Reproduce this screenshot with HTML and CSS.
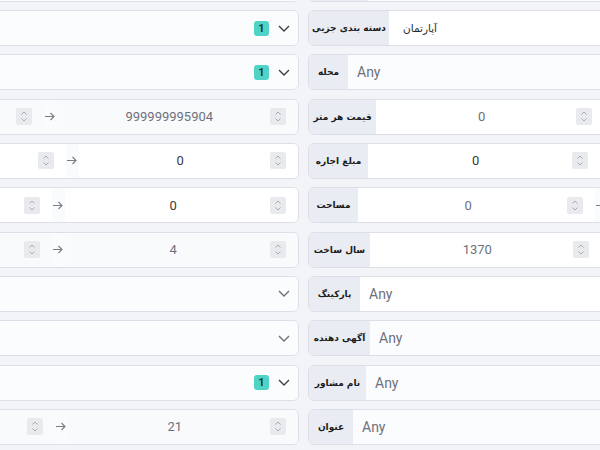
FILE: index.html
```html
<!DOCTYPE html>
<html lang="fa">
<head>
<meta charset="utf-8">
<title>فیلتر آگهی</title>
<link rel="stylesheet" href="styles.css">
</head>
<body>
<div class="form">

  <!-- row 0 -->
  <div class="field"><div class="label w60">شهر</div><div class="select"><span class="any">Any</span><span class="chev muted"><svg width="12" height="7" viewBox="0 0 12 7"><path d="M1 1l5 5 5-5"/></svg></span></div></div>
  <div class="field"><div class="label w60">دسته بندی</div><div class="select"><span class="any">Any</span></div></div>

  <!-- row 1 -->
  <div class="field"><div class="label w60">نوع آگهی</div><div class="select"><span class="any">Any</span><span class="badge">1</span><span class="chev"><svg width="12" height="7" viewBox="0 0 12 7"><path d="M1 1l5 5 5-5"/></svg></span></div></div>
  <div class="field"><div class="label w81">دسته بندی جزیی</div><div class="select white"><span class="fa-val">آپارتمان</span></div></div>

  <!-- row 2 -->
  <div class="field"><div class="label w60">منطقه</div><div class="select"><span class="any">Any</span><span class="badge">1</span><span class="chev"><svg width="12" height="7" viewBox="0 0 12 7"><path d="M1 1l5 5 5-5"/></svg></span></div></div>
  <div class="field"><div class="label w40">محله</div><div class="select"><span class="any">Any</span></div></div>

  <!-- row 3 -->
  <div class="field"><div class="label w40">قیمت</div>
    <div class="num soft"><span class="val grey">0</span><span class="spin"><svg width="16" height="17" viewBox="0 0 16 17"><path d="M5.5 6.5L8 4l2.5 2.5M5.5 10.5L8 13l2.5-2.5"/></svg></span></div>
    <div class="arrow"><svg width="10" height="9" viewBox="0 0 10 9"><path d="M0 4.5h9M5.5 1L9 4.5 5.5 8"/></svg></div>
    <div class="num soft"><span class="val grey">999999995904</span><span class="spin"><svg width="16" height="17" viewBox="0 0 16 17"><path d="M5.5 6.5L8 4l2.5 2.5M5.5 10.5L8 13l2.5-2.5"/></svg></span></div>
  </div>
  <div class="field"><div class="label w68">قیمت هر متر</div>
    <div class="num white"><span class="val grey">0</span><span class="spin"><svg width="16" height="17" viewBox="0 0 16 17"><path d="M5.5 6.5L8 4l2.5 2.5M5.5 10.5L8 13l2.5-2.5"/></svg></span></div>
    <div class="arrow"><svg width="10" height="9" viewBox="0 0 10 9"><path d="M0 4.5h9M5.5 1L9 4.5 5.5 8"/></svg></div>
    <div class="num white"><span class="val grey">0</span><span class="spin"><svg width="16" height="17" viewBox="0 0 16 17"><path d="M5.5 6.5L8 4l2.5 2.5M5.5 10.5L8 13l2.5-2.5"/></svg></span></div>
  </div>

  <!-- row 4 -->
  <div class="field"><div class="label w84">مبلغ ودیعه</div>
    <div class="num white"><span class="val">0</span><span class="spin"><svg width="16" height="17" viewBox="0 0 16 17"><path d="M5.5 6.5L8 4l2.5 2.5M5.5 10.5L8 13l2.5-2.5"/></svg></span></div>
    <div class="arrow"><svg width="10" height="9" viewBox="0 0 10 9"><path d="M0 4.5h9M5.5 1L9 4.5 5.5 8"/></svg></div>
    <div class="num white"><span class="val">0</span><span class="spin"><svg width="16" height="17" viewBox="0 0 16 17"><path d="M5.5 6.5L8 4l2.5 2.5M5.5 10.5L8 13l2.5-2.5"/></svg></span></div>
  </div>
  <div class="field"><div class="label w60">مبلغ اجاره</div>
    <div class="num white"><span class="val">0</span><span class="spin"><svg width="16" height="17" viewBox="0 0 16 17"><path d="M5.5 6.5L8 4l2.5 2.5M5.5 10.5L8 13l2.5-2.5"/></svg></span></div>
    <div class="arrow"><svg width="10" height="9" viewBox="0 0 10 9"><path d="M0 4.5h9M5.5 1L9 4.5 5.5 8"/></svg></div>
    <div class="num white"><span class="val">0</span><span class="spin"><svg width="16" height="17" viewBox="0 0 16 17"><path d="M5.5 6.5L8 4l2.5 2.5M5.5 10.5L8 13l2.5-2.5"/></svg></span></div>
  </div>

  <!-- row 5 -->
  <div class="field"><div class="label w56">تعداد اتاق</div>
    <div class="num white"><span class="val">0</span><span class="spin"><svg width="16" height="17" viewBox="0 0 16 17"><path d="M5.5 6.5L8 4l2.5 2.5M5.5 10.5L8 13l2.5-2.5"/></svg></span></div>
    <div class="arrow"><svg width="10" height="9" viewBox="0 0 10 9"><path d="M0 4.5h9M5.5 1L9 4.5 5.5 8"/></svg></div>
    <div class="num white"><span class="val">0</span><span class="spin"><svg width="16" height="17" viewBox="0 0 16 17"><path d="M5.5 6.5L8 4l2.5 2.5M5.5 10.5L8 13l2.5-2.5"/></svg></span></div>
  </div>
  <div class="field"><div class="label w50">مساحت</div>
    <div class="num white"><span class="val grey">0</span><span class="spin"><svg width="16" height="17" viewBox="0 0 16 17"><path d="M5.5 6.5L8 4l2.5 2.5M5.5 10.5L8 13l2.5-2.5"/></svg></span></div>
    <div class="arrow"><svg width="10" height="9" viewBox="0 0 10 9"><path d="M0 4.5h9M5.5 1L9 4.5 5.5 8"/></svg></div>
    <div class="num white"><span class="val grey">0</span><span class="spin"><svg width="16" height="17" viewBox="0 0 16 17"><path d="M5.5 6.5L8 4l2.5 2.5M5.5 10.5L8 13l2.5-2.5"/></svg></span></div>
  </div>

  <!-- row 6 -->
  <div class="field"><div class="label w56">طبقه</div>
    <div class="num soft"><span class="val grey">0</span><span class="spin"><svg width="16" height="17" viewBox="0 0 16 17"><path d="M5.5 6.5L8 4l2.5 2.5M5.5 10.5L8 13l2.5-2.5"/></svg></span></div>
    <div class="arrow"><svg width="10" height="9" viewBox="0 0 10 9"><path d="M0 4.5h9M5.5 1L9 4.5 5.5 8"/></svg></div>
    <div class="num soft"><span class="val grey">4</span><span class="spin"><svg width="16" height="17" viewBox="0 0 16 17"><path d="M5.5 6.5L8 4l2.5 2.5M5.5 10.5L8 13l2.5-2.5"/></svg></span></div>
  </div>
  <div class="field"><div class="label w62">سال ساخت</div>
    <div class="num white"><span class="val grey">1370</span><span class="spin"><svg width="16" height="17" viewBox="0 0 16 17"><path d="M5.5 6.5L8 4l2.5 2.5M5.5 10.5L8 13l2.5-2.5"/></svg></span></div>
    <div class="arrow"><svg width="10" height="9" viewBox="0 0 10 9"><path d="M0 4.5h9M5.5 1L9 4.5 5.5 8"/></svg></div>
    <div class="num white"><span class="val grey">1404</span><span class="spin"><svg width="16" height="17" viewBox="0 0 16 17"><path d="M5.5 6.5L8 4l2.5 2.5M5.5 10.5L8 13l2.5-2.5"/></svg></span></div>
  </div>

  <!-- row 7 -->
  <div class="field"><div class="label w60">آسانسور</div><div class="select"><span class="any">Any</span><span class="chev muted"><svg width="12" height="7" viewBox="0 0 12 7"><path d="M1 1l5 5 5-5"/></svg></span></div></div>
  <div class="field"><div class="label w52">پارکینگ</div><div class="select white"><span class="any">Any</span></div></div>

  <!-- row 8 -->
  <div class="field"><div class="label w60">انباری</div><div class="select"><span class="any">Any</span><span class="chev muted"><svg width="12" height="7" viewBox="0 0 12 7"><path d="M1 1l5 5 5-5"/></svg></span></div></div>
  <div class="field"><div class="label w62">آگهی دهنده</div><div class="select"><span class="any">Any</span></div></div>

  <!-- row 9 -->
  <div class="field"><div class="label w60">وضعیت</div><div class="select"><span class="any">Any</span><span class="badge">1</span><span class="chev"><svg width="12" height="7" viewBox="0 0 12 7"><path d="M1 1l5 5 5-5"/></svg></span></div></div>
  <div class="field"><div class="label w58">نام مشاور</div><div class="select"><span class="any">Any</span></div></div>

  <!-- row 10 -->
  <div class="field"><div class="label w62">روز</div>
    <div class="num soft"><span class="val grey">0</span><span class="spin"><svg width="16" height="17" viewBox="0 0 16 17"><path d="M5.5 6.5L8 4l2.5 2.5M5.5 10.5L8 13l2.5-2.5"/></svg></span></div>
    <div class="arrow"><svg width="10" height="9" viewBox="0 0 10 9"><path d="M0 4.5h9M5.5 1L9 4.5 5.5 8"/></svg></div>
    <div class="num soft"><span class="val grey">21</span><span class="spin"><svg width="16" height="17" viewBox="0 0 16 17"><path d="M5.5 6.5L8 4l2.5 2.5M5.5 10.5L8 13l2.5-2.5"/></svg></span></div>
  </div>
  <div class="field"><div class="label w45">عنوان</div><div class="select"><span class="any">Any</span></div></div>

</div>
</body>
</html>
```

FILE: styles.css
```css
html, body {
  margin: 0;
  padding: 0;
}
body {
  background: #f3f4f8;
  width: 600px;
  height: 450px;
  overflow: hidden;
  font-family: Roboto, "Liberation Sans", sans-serif;
}
.form {
  display: grid;
  grid-template-columns: 537px 537px;
  column-gap: 9px;
  row-gap: 8.33px;
  margin-left: -238px;
  margin-top: -34.33px;
  width: 1083px;
}
.field {
  box-sizing: border-box;
  height: 36px;
  display: flex;
  align-items: stretch;
  border: 1px solid #dcdfe8;
  border-radius: 6px;
  overflow: hidden;
  background: #fafbfd;
}
.label {
  flex: none;
  display: flex;
  align-items: center;
  justify-content: center;
  background: #e9ecf2;
  color: #1c1c1c;
  font-family: "DejaVu Sans", sans-serif;
  font-weight: bold;
  font-size: 9px;
  white-space: nowrap;
  direction: rtl;
}
.w40 { width: 39px; }
.w45 { width: 44px; }
.w50 { width: 49px; }
.w52 { width: 51px; }
.w56 { width: 55px; }
.w58 { width: 57px; }
.w60 { width: 59px; }
.w62 { width: 61px; }
.w68 { width: 67px; }
.w81 { width: 80px; }
.w84 { width: 83px; }

.select {
  flex: 1;
  display: flex;
  align-items: center;
  padding: 0 8px 0 9px;
  background: #fbfcfe;
}
.select.white { background: #ffffff; }
.any {
  flex: 1;
  font-size: 14px;
  color: #6e717b;
}
.fa-val {
  flex: 1;
  font-family: "DejaVu Sans", sans-serif;
  font-size: 10.5px;
  color: #2a2a2a;
  padding-left: 5px;
}
.badge {
  flex: none;
  width: 15px;
  height: 15px;
  border-radius: 3px;
  background: #4fd3c6;
  color: #143a36;
  font-size: 11px;
  font-weight: bold;
  display: flex;
  align-items: center;
  justify-content: center;
  margin-right: 9px;
}
.chev {
  display: flex;
  flex: none;
}
.chev path {
  fill: none;
  stroke: #3d3f44;
  stroke-width: 1.4;
}
.chev.muted path { stroke: #6d717a; }

.num {
  flex: 1 1 0;
  min-width: 0;
  display: flex;
  align-items: center;
  padding: 0 12px;
}
.num.white { background: #ffffff; }
.num.soft { background: #f9fafc; }
.val {
  flex: 1;
  text-align: center;
  font-size: 13px;
  color: #3a3a3a;
}
.val.grey { color: #6e717b; }
.spin {
  flex: none;
  display: flex;
  width: 16px;
  height: 17px;
  background: #e9eaee;
  border-radius: 2px;
}
.spin path {
  fill: none;
  stroke: #a8abb2;
  stroke-width: 1;
}
.arrow {
  flex: none;
  width: 13px;
  display: flex;
  align-items: center;
  padding-left: 1px;
  box-sizing: border-box;
}
.arrow path {
  fill: none;
  stroke: #7a7d85;
  stroke-width: 1.1;
}
```
